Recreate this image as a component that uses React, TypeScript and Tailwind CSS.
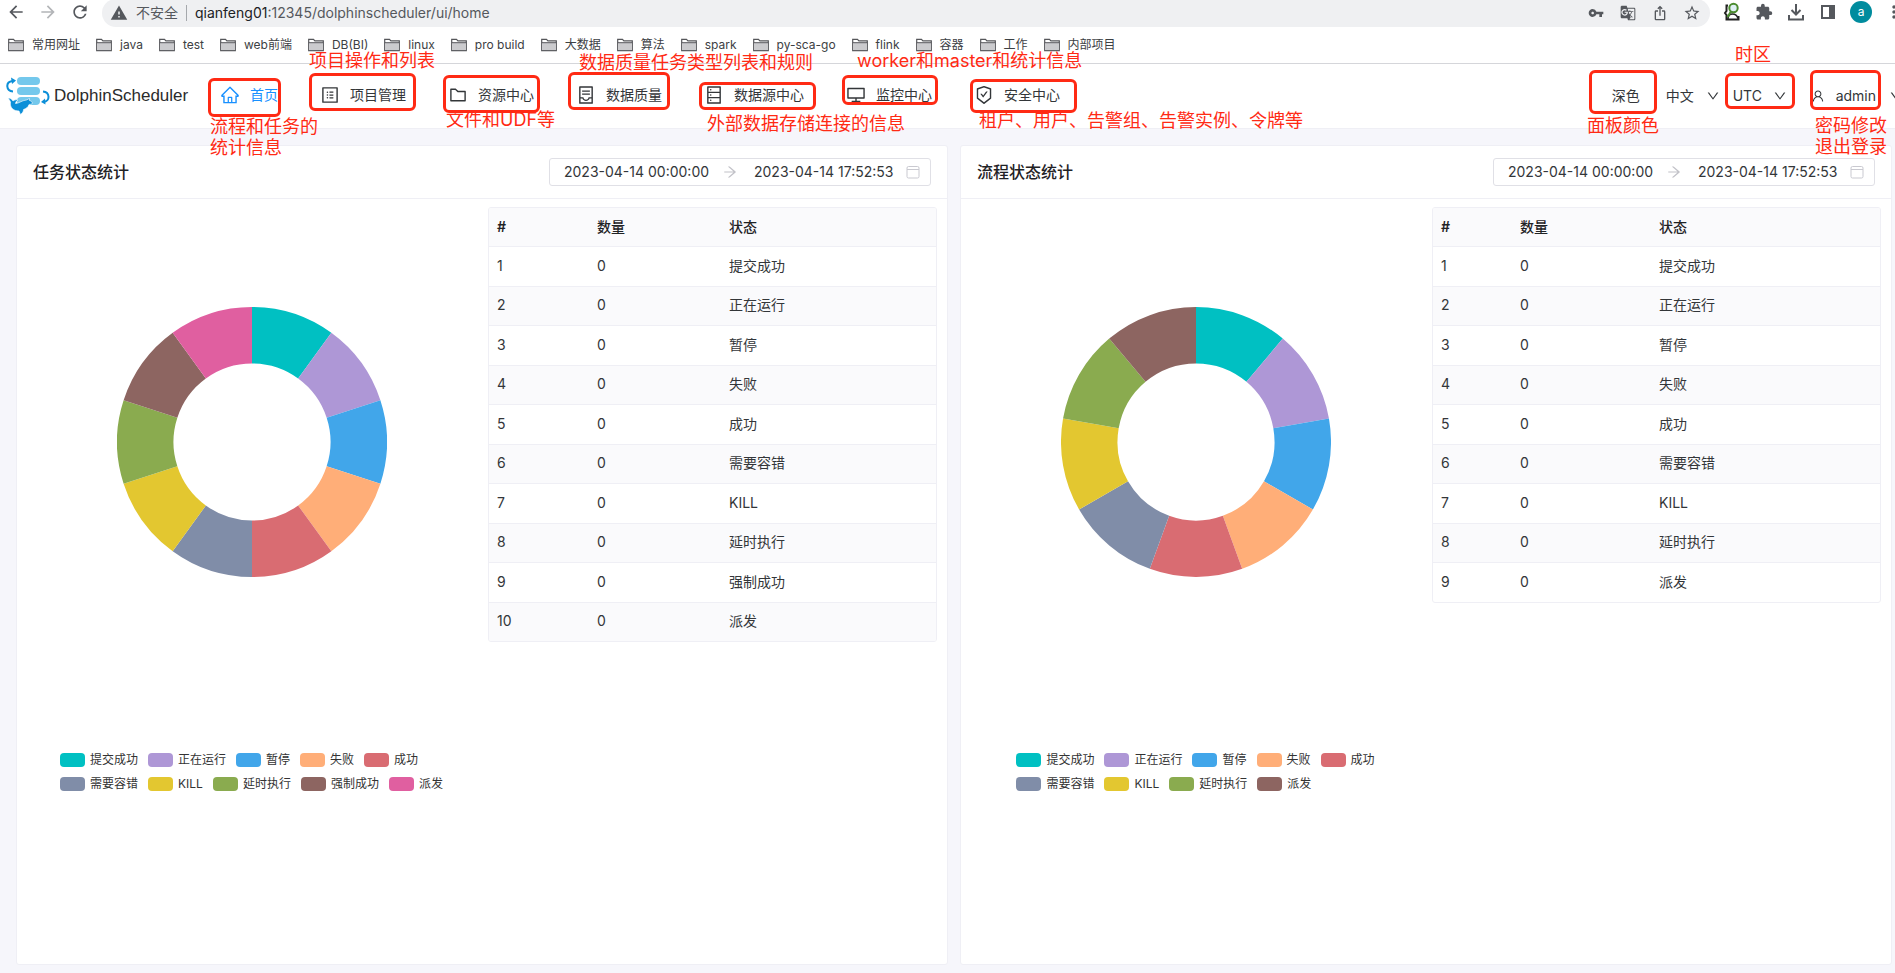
import React from "react";
import {
  AiOutlineArrowRight,
  AiOutlineContainer,
  AiOutlineDatabase,
  AiOutlineDesktop,
  AiOutlineDown,
  AiOutlineFolder,
  AiOutlineHome,
  AiOutlineProfile,
  AiOutlineSafetyCertificate,
  AiOutlineUser,
} from "react-icons/ai";
import {
  MdArrowBack,
  MdArrowForward,
  MdExtension,
  MdGTranslate,
  MdIosShare,
  MdMoreVert,
  MdRefresh,
  MdStarBorder,
  MdVpnKey,
  MdWarning,
} from "react-icons/md";

const bookmarks = [
  "常用网址",
  "java",
  "test",
  "web前端",
  "DB(BI)",
  "linux",
  "pro build",
  "大数据",
  "算法",
  "spark",
  "py-sca-go",
  "flink",
  "容器",
  "工作",
  "内部项目",
];

const menus = [
  { label: "首页", icon: AiOutlineHome, active: true },
  { label: "项目管理", icon: AiOutlineProfile },
  { label: "资源中心", icon: AiOutlineFolder },
  { label: "数据质量", icon: AiOutlineContainer },
  { label: "数据源中心", icon: AiOutlineDatabase },
  { label: "监控中心", icon: AiOutlineDesktop },
  { label: "安全中心", icon: AiOutlineSafetyCertificate },
];

const colors = [
  "#00c0c2",
  "#ae97d6",
  "#41a6ea",
  "#ffae78",
  "#d96c72",
  "#808da8",
  "#e3c730",
  "#8aab4f",
  "#8d6561",
  "#e05fa0",
];

const taskStates = ["提交成功", "正在运行", "暂停", "失败", "成功", "需要容错", "KILL", "延时执行", "强制成功", "派发"];
const processStates = ["提交成功", "正在运行", "暂停", "失败", "成功", "需要容错", "KILL", "延时执行", "派发"];

const frames = [
  "left-[208px] top-[78px] w-[73px] h-[39px]",
  "left-[309px] top-[73px] w-[107px] h-[38px]",
  "left-[443px] top-[75px] w-[97px] h-[38px]",
  "left-[568px] top-[72px] w-[102px] h-[38px]",
  "left-[699px] top-[82px] w-[117px] h-[28px]",
  "left-[842px] top-[75px] w-[96px] h-[30px]",
  "left-[970px] top-[79px] w-[107px] h-[34px]",
  "right-[238px] top-[70px] w-[68px] h-[44px]",
  "right-[100px] top-[73px] w-[70px] h-[36px]",
  "right-[14px] top-[70px] w-[71px] h-[40px]",
];

const notes = [
  { at: "left-[210px] top-[116px]", lines: ["流程和任务的", "统计信息"] },
  { at: "left-[309px] top-[50px]", lines: ["项目操作和列表"] },
  { at: "left-[446px] top-[109px]", lines: ["文件和UDF等"] },
  { at: "left-[579px] top-[52px]", lines: ["数据质量任务类型列表和规则"] },
  { at: "left-[707px] top-[113px]", lines: ["外部数据存储连接的信息"] },
  { at: "left-[857px] top-[50px]", lines: ["worker和master和统计信息"] },
  { at: "left-[979px] top-[110px]", lines: ["租户、用户、告警组、告警实例、令牌等"] },
  { at: "right-[236px] top-[115px]", lines: ["面板颜色"] },
  { at: "right-[124px] top-[44px]", lines: ["时区"] },
  { at: "right-[8px] top-[115px]", lines: ["密码修改", "退出登录"] },
];

const FolderIcon: React.FC = () => (
  <svg className="h-4 w-4 shrink-0" viewBox="0 0 16 16" fill="none">
    <path d="M.7 13.6V2.4h4.8l1.4 1.5h8.4v9.7z" fill="#fff" stroke="#55565a" strokeWidth="1.2" />
    <path d="M1.2 6h13.6v7.1H1.2z" fill="#cbcbce" />
    <path d="M.8 5.7h14.4" stroke="#55565a" strokeWidth="1" />
  </svg>
);

const BrowserBar: React.FC = () => (
  <div className="-mr-[9px] flex h-7 items-center gap-3 pl-[6px] text-[#55585d]">
    <button aria-label="后退" className="-mt-1">
      <MdArrowBack className="h-5 w-5" />
    </button>
    <button aria-label="前进" className="-mt-1 text-[#b3b5b8]">
      <MdArrowForward className="h-5 w-5" />
    </button>
    <button aria-label="刷新" className="-mt-1">
      <MdRefresh className="h-5 w-5" />
    </button>
    <div className="-mt-[2px] flex h-7 flex-1 items-center gap-3 rounded-full bg-[#eff0f2] pr-2 pl-2">
      <div className="flex items-center text-sm whitespace-nowrap">
        <MdWarning className="mr-2 h-[18px] w-[18px]" />
        <span>不安全</span>
        <span className="mx-2 h-4 w-px bg-[#a5a8ac]" />
        <span>
          <span className="text-[#202124]">qianfeng01</span>:12345/dolphinscheduler/ui/home
        </span>
      </div>
      <MdVpnKey className="ml-auto h-4 w-5" />
      <MdGTranslate className="h-4 w-5" />
      <MdIosShare className="h-4 w-5" />
      <MdStarBorder className="h-[18px] w-5" />
    </div>
    <svg className="-mt-1 h-5 w-5" viewBox="0 0 20 20" fill="none">
      <path d="M6 3.5H4.5V9L3 11l1.5 2v4.5h12V14" stroke="#222" strokeWidth="2" />
      <path d="M6 17c0-4 2-5 4.5-5s4.5 1 5.5 4.5" stroke="#222" strokeWidth="1.5" />
      <circle cx="11.5" cy="6" r="4.2" fill="#dff0f5" stroke="#4b8b2f" strokeWidth="2" />
      <path d="M9 9.5L5.5 15" stroke="#4b8b2f" strokeWidth="2.2" />
    </svg>
    <MdExtension className="-mt-1 h-[18px] w-5" />
    <svg className="-mt-1 h-5 w-5" viewBox="0 0 20 20" fill="none" stroke="currentColor" strokeWidth="2">
      <path d="M10 2v10M5.5 8l4.5 4.5L14.5 8M3 13v4.5h14V13" />
    </svg>
    <svg className="-mt-1 h-5 w-5" viewBox="0 0 20 20">
      <path d="M3 3h14v14H3zM5 5v10h6V5z" fill="currentColor" fillRule="evenodd" />
    </svg>
    <span className="-mt-1 flex h-[22px] w-[22px] items-center justify-center rounded-full bg-[#008c9e] text-xs text-white">
      a
    </span>
    <MdMoreVert className="-mt-1 h-5 w-5 shrink-0" />
  </div>
);

const Bookmarks: React.FC = () => (
  <div className="flex h-9 items-center gap-4 border-b border-[#d5d6da] pb-[2px] pl-2 text-xs text-[#3c4043]">
    {bookmarks.map((name) => (
      <a key={name} href="#" className="flex items-center gap-2 whitespace-nowrap">
        <FolderIcon />
        {name}
      </a>
    ))}
  </div>
);

const Logo: React.FC = () => (
  <div className="flex w-[220px] items-center gap-1 pl-[6px]">
    <svg className="h-10 w-11 shrink-0" viewBox="0 0 44 40">
      <g fill="#74c8ec">
        <rect x="11" y="1" width="23" height="8" rx="4" />
        <rect x="11" y="11" width="23" height="8" rx="4" />
        <rect x="11" y="21" width="23" height="8" rx="4" />
      </g>
      <path d="M7 15.5C0 15 -1 6 6.5 5" fill="none" stroke="#0c8fd8" strokeWidth="2" />
      <path d="M5 1.5l5 3-4 3.5z" fill="#0c8fd8" />
      <path d="M37 15.5c7 .5 7.5 10 .5 10.5" fill="none" stroke="#0c8fd8" strokeWidth="2" />
      <path d="M39 22.5l-4 3.5 4.5 2.5z" fill="#0c8fd8" />
      <path
        d="M2 22c2 0 4 1 5 3 1-1 3-1.5 5-1-2 1.500-2.500 2.500-2.500 3.500 3.500 0 6-3 11-3.500l3-1.500v2c3 1 3 2.500 2.500 3.500l-3 .5c-1 3-3 4-5.500 5 0 2-1 3.500-3 5l-1.500-3.500C8 35 3.500 32 4.500 26 4 24.500 3 23.500 2 22z"
        fill="#0c8fd8"
        stroke="#fff"
        strokeWidth=".6"
      />
    </svg>
    <span className="font-['Liberation_Sans'] text-[17px] text-[#2b2b2b]">DolphinScheduler</span>
  </div>
);

const NavSelect: React.FC<{ label: string; value: string }> = ({ label, value }) => (
  <label className="flex items-center">
    <select aria-label={label} className="w-10 appearance-none bg-transparent" defaultValue={value}>
      <option>{value}</option>
    </select>
    <AiOutlineDown className="h-[14px] w-[14px]" />
  </label>
);

const NavBar: React.FC = () => (
  <header className="flex h-[65px] items-center border-b border-[#efeff5] bg-white text-sm whitespace-nowrap text-[#333639]">
    <Logo />
    <nav className="flex items-center gap-[42px] pb-[2px]">
      {menus.map(({ label, icon: Icon, active }) => (
        <a
          key={label}
          href="#"
          className={active ? "flex items-center gap-[10px] text-[#1890ff]" : "flex items-center gap-[10px]"}
        >
          <Icon className="h-5 w-5" />
          {label}
        </a>
      ))}
    </nav>
    <div className="-mr-2 ml-auto flex items-center">
      <button className="mr-[26px]">深色</button>
      <div className="flex items-center gap-[13px]">
        <NavSelect label="语言" value="中文" />
        <NavSelect label="时区设置" value="UTC" />
      </div>
      <button className="ml-6 flex items-center">
        <AiOutlineUser className="mr-[11px] h-[14px] w-[14px]" />
        admin
        <AiOutlineDown className="ml-[13px] h-[14px] w-[14px]" />
      </button>
    </div>
  </header>
);

const DateRange: React.FC<{ name: string }> = ({ name }) => (
  <div className="flex h-7 w-[382px] items-center rounded-[3px] border border-[#e0e0e6] pr-[10px] pl-[14px] text-sm text-[#333639]">
    <input aria-label={`${name}开始时间`} className="w-[150px] outline-none" defaultValue="2023-04-14 00:00:00" />
    <AiOutlineArrowRight className="mr-4 ml-2 h-4 w-4 shrink-0 text-[#c2c2c8]" />
    <input aria-label={`${name}结束时间`} className="w-0 flex-1 outline-none" defaultValue="2023-04-14 17:52:53" />
    <svg className="h-[14px] w-[14px] shrink-0" viewBox="0 0 14 14" fill="none" stroke="#c9c9d0">
      <rect x="1" y="1.5" width="12" height="11.5" rx="1.5" />
      <path d="M1 4.5h12" />
    </svg>
  </div>
);

const point = (r: number, turn: number) => {
  const a = turn * 2 * Math.PI;
  return `${(135 + r * Math.sin(a)).toFixed(2)} ${(135 - r * Math.cos(a)).toFixed(2)}`;
};

const Donut: React.FC<{ count: number }> = ({ count }) => (
  <svg className="h-[270px] w-[270px]" viewBox="0 0 270 270">
    {colors.slice(0, count).map((color, i) => {
      const from = i / count;
      const to = (i + 1) / count;
      return (
        <path
          key={color}
          fill={color}
          d={`M${point(135, from)} A135 135 0 0 1 ${point(135, to)} L${point(78.5, to)} A78.5 78.5 0 0 0 ${point(78.5, from)}Z`}
        />
      );
    })}
  </svg>
);

const Legend: React.FC<{ states: string[] }> = ({ states }) => (
  <div className="flex flex-col gap-[10px]">
    {[0, 5].map((start) => (
      <ul key={start} className="flex gap-[10px]">
        {states.slice(start, start + 5).map((state, i) => (
          <li key={state} className="flex h-[14px] items-center gap-[5px] text-xs whitespace-nowrap text-[#333]">
            <span className="h-[14px] w-[25px] rounded" style={{ backgroundColor: colors[start + i] }} />
            {state}
          </li>
        ))}
      </ul>
    ))}
  </div>
);

interface CardProps {
  title: string;
  states: string[];
  indexWidth: string;
  countWidth: string;
}

const StateCard: React.FC<CardProps> = ({ title, states, indexWidth, countWidth }) => (
  <section className="min-h-[820px] rounded-[3px] border border-[#efeff5] bg-white">
    <div className="flex items-center justify-between border-b border-[#efeff5] px-4 py-3">
      <h2 className="text-base font-medium text-[#1f2225]">{title}</h2>
      <DateRange name={title} />
    </div>
    <div className="grid grid-cols-2 items-start gap-3 px-[10px] pt-2">
      <div className="flex flex-col items-center gap-44 pt-[100px]">
        <Donut count={states.length} />
        <Legend states={states} />
      </div>
      <table className="w-full table-fixed border-separate border-spacing-0 overflow-hidden rounded-[3px] border border-[#efeff5] text-left text-sm text-[#333639]">
        <thead>
          <tr className="h-[38px] bg-[#fafafc] text-[#1f2225]">
            <th className={`px-2 font-semibold ${indexWidth}`}>#</th>
            <th className={`px-2 font-medium ${countWidth}`}>数量</th>
            <th className="px-2 font-medium">状态</th>
          </tr>
        </thead>
        <tbody>
          {states.map((state, i) => (
            <tr key={state} className="odd:h-10 even:h-[39px] even:bg-[#fafafc]">
              <td className="border-t border-[#efeff5] px-2 pb-[2px]">{i + 1}</td>
              <td className="border-t border-[#efeff5] px-2 pb-[2px]">0</td>
              <td className="border-t border-[#efeff5] px-2 pb-[2px]">{state}</td>
            </tr>
          ))}
        </tbody>
      </table>
    </div>
  </section>
);

const Annotations: React.FC = () => (
  <div className="pointer-events-none absolute inset-0 text-lg leading-[21px] whitespace-nowrap text-[#ff2a14]">
    {frames.map((frame) => (
      <div key={frame} className={`absolute rounded-md border-3 border-[#ff2a14] ${frame}`} />
    ))}
    {notes.map(({ at, lines }) => (
      <div key={at} className={`absolute ${at}`}>
        {lines.map((line) => (
          <p key={line}>{line}</p>
        ))}
      </div>
    ))}
  </div>
);

const App: React.FC = () => {
  return (
    <div className="relative min-h-screen overflow-hidden bg-[#f6f6fb] font-['Inter','Noto_Sans_CJK_SC',sans-serif]">
      <div className="bg-white">
        <BrowserBar />
        <Bookmarks />
      </div>
      <NavBar />
      <main className="grid grid-cols-2 gap-3 pt-4 pr-[3px] pb-2 pl-4">
        <StateCard title="任务状态统计" states={taskStates} indexWidth="w-[100px]" countWidth="w-[132px]" />
        <StateCard title="流程状态统计" states={processStates} indexWidth="w-[79px]" countWidth="w-[139px]" />
      </main>
      <Annotations />
    </div>
  );
};

export default App;
